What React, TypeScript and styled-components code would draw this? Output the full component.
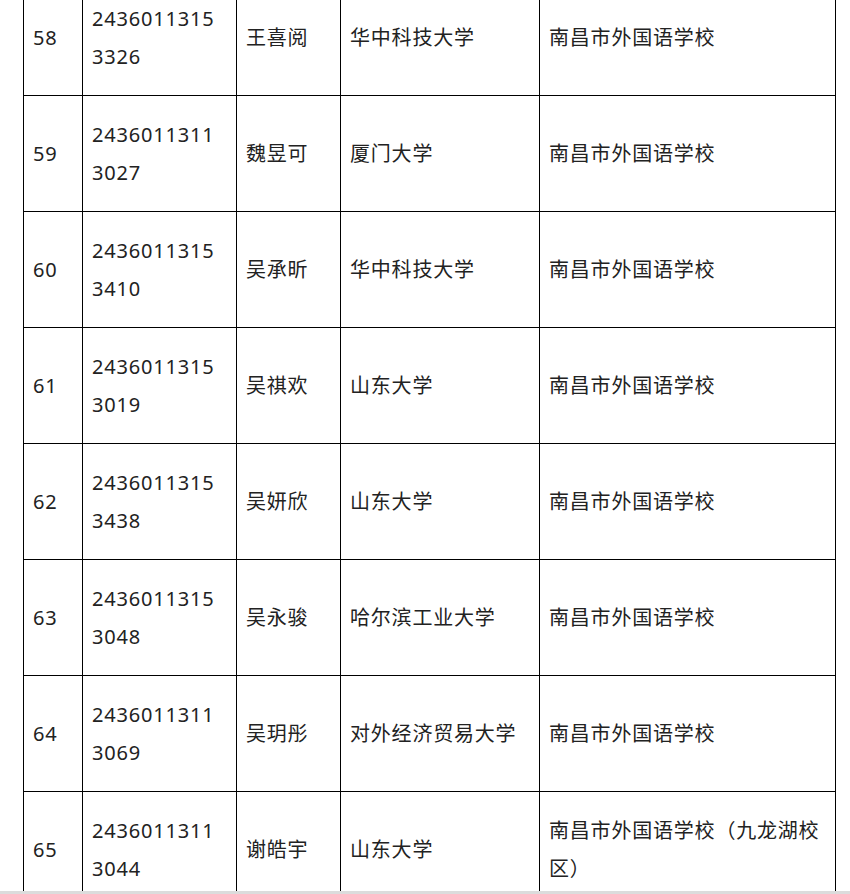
import React from "react";
import styled, { createGlobalStyle } from "styled-components";

const GlobalStyle = createGlobalStyle`
  html, body {
    margin: 0;
    padding: 0;
    background: #ffffff;
  }
  body {
    font-family: "Noto Sans", "Noto Sans CJK SC", sans-serif;
    overflow: hidden;
  }
`;

type Row = {
  no: number;
  code: string;
  name: string;
  college: string;
  school: string;
};

const colWidths = [59, 154, 104, 199, 296];

const rows: Row[] = [
  { no: 58, code: "24360113153326", name: "王喜阅", college: "华中科技大学", school: "南昌市外国语学校" },
  { no: 59, code: "24360113113027", name: "魏昱可", college: "厦门大学", school: "南昌市外国语学校" },
  { no: 60, code: "24360113153410", name: "吴承昕", college: "华中科技大学", school: "南昌市外国语学校" },
  { no: 61, code: "24360113153019", name: "吴祺欢", college: "山东大学", school: "南昌市外国语学校" },
  { no: 62, code: "24360113153438", name: "吴妍欣", college: "山东大学", school: "南昌市外国语学校" },
  { no: 63, code: "24360113153048", name: "吴永骏", college: "哈尔滨工业大学", school: "南昌市外国语学校" },
  { no: 64, code: "24360113113069", name: "吴玥彤", college: "对外经济贸易大学", school: "南昌市外国语学校" },
  { no: 65, code: "24360113113044", name: "谢皓宇", college: "山东大学", school: "南昌市外国语学校（九龙湖校区）" },
];

const App = () => {
  return (
    <>
      <GlobalStyle />
      <Page>
        <Table>
          <colgroup>
            {colWidths.map((w, i) => (
              <Col key={i} $w={w} />
            ))}
          </colgroup>
          <tbody>
            {rows.map((r) => (
              <tr key={r.no}>
                <Cell>{r.no}</Cell>
                <Cell $breakAll>{r.code}</Cell>
                <Cell>{r.name}</Cell>
                <Cell>{r.college}</Cell>
                <Cell>{r.school}</Cell>
              </tr>
            ))}
          </tbody>
        </Table>
      </Page>
      <BottomBar />
    </>
  );
};

export default App;

const Page = styled.div`
  padding-left: 23px;
  margin-top: -21px;
`;

const Table = styled.table`
  width: 812px;
  table-layout: fixed;
  border-collapse: collapse;
`;

const Col = styled.col<{ $w: number }>`
  width: ${(p) => p.$w}px;
`;

const Cell = styled.td<{ $breakAll?: boolean }>`
  border: 1px solid #000;
  padding: 20px 12px 19px 9px;
  vertical-align: middle;
  font-size: 20px;
  line-height: 38px;
  letter-spacing: 0.8px;
  color: #222;
  word-break: ${(p) => (p.$breakAll ? "break-all" : "normal")};
`;

const BottomBar = styled.div`
  position: fixed;
  left: 0;
  right: 0;
  bottom: 0;
  height: 3px;
  background: #dcdcdc;
`;
